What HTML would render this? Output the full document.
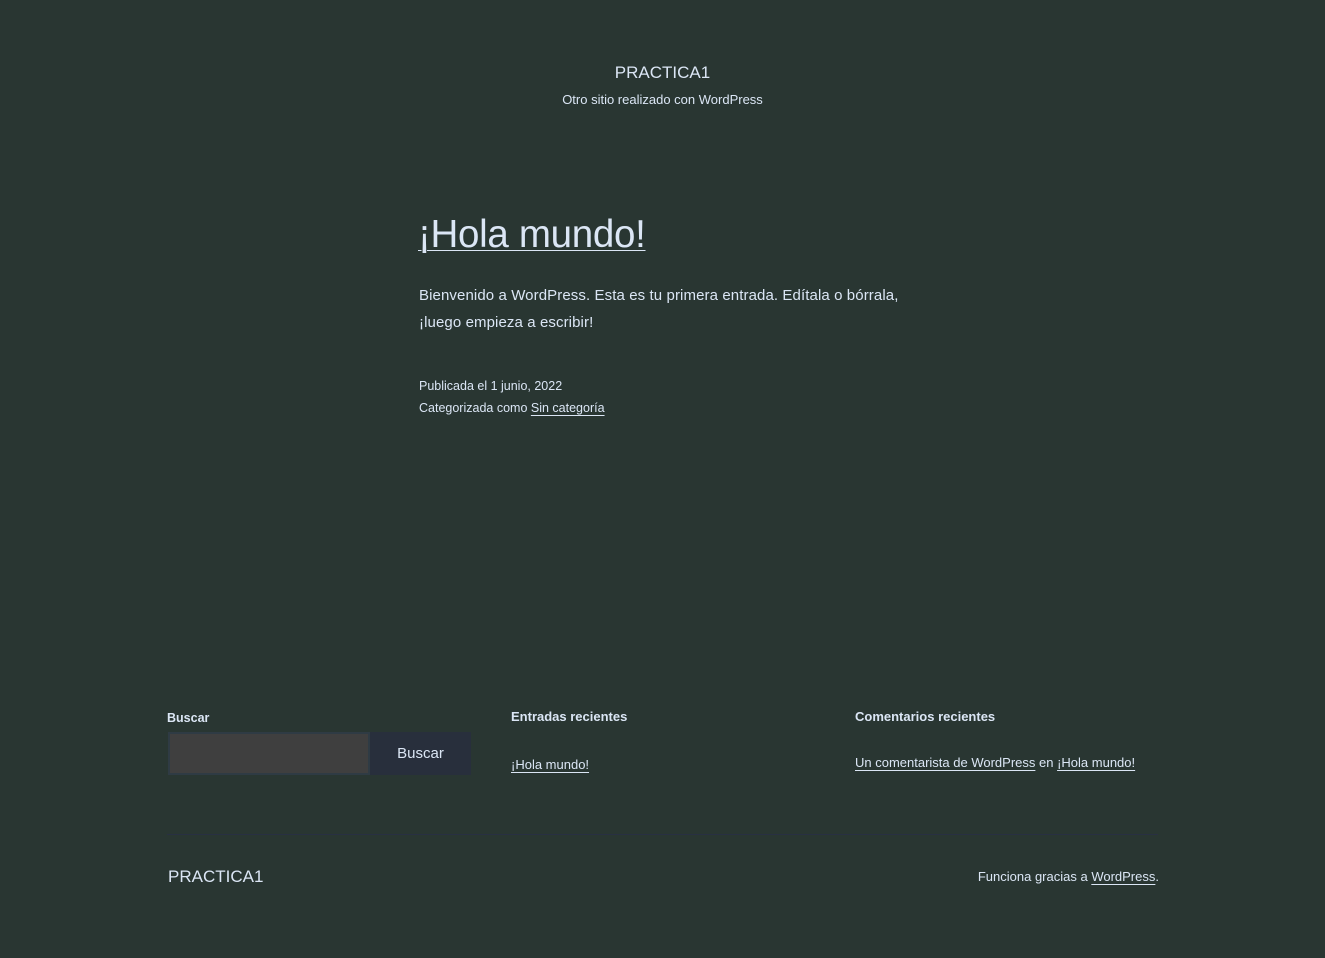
<!DOCTYPE html>
<html><head><meta charset="utf-8"><style>
body{margin:0;width:1325px;height:958px;background:#293632;color:#dbe6f5;font-family:"Liberation Sans",sans-serif;position:relative;overflow:hidden}
.a{position:absolute;white-space:nowrap}
u{text-decoration:underline;text-underline-offset:3px;text-decoration-thickness:1px}
</style></head><body>
<div class="a" style="left:0;width:1325px;text-align:center;top:63px;font-size:17px">PRACTICA1</div>
<div class="a" style="left:0;width:1325px;text-align:center;top:92px;font-size:13px">Otro sitio realizado con WordPress</div>
<div class="a" style="left:418px;top:213px;font-size:38.5px;font-weight:300;letter-spacing:-0.3px"><u>¡Hola mundo!</u></div>
<div class="a" style="left:419px;top:282px;font-size:15px;line-height:27px;font-weight:300;letter-spacing:0.1px">Bienvenido a WordPress. Esta es tu primera entrada. Edítala o bórrala,<br>¡luego empieza a escribir!</div>
<div class="a" style="left:419px;top:375px;font-size:12.5px;line-height:22px">Publicada el 1 junio, 2022<br>Categorizada como <u>Sin categoría</u></div>
<div class="a" style="left:167px;top:711px;font-size:12.5px;font-weight:bold">Buscar</div>
<div class="a" style="left:168px;top:732px;width:198px;height:39px;background:#3f3f3f;border:2px solid #2f3b44"></div>
<div class="a" style="left:370px;top:732px;width:101px;height:43px;background:#282f3c;text-align:center;line-height:43px;font-size:15px">Buscar</div>
<div class="a" style="left:511px;top:709px;font-size:13px;font-weight:bold">Entradas recientes</div>
<div class="a" style="left:511px;top:757px;font-size:13px"><u>¡Hola mundo!</u></div>
<div class="a" style="left:855px;top:709px;font-size:13px;font-weight:bold">Comentarios recientes</div>
<div class="a" style="left:855px;top:755px;font-size:13px"><u>Un comentarista de WordPress</u> en <u>¡Hola mundo!</u></div>
<div class="a" style="left:167px;top:834px;width:991px;height:1px;background:#283042"></div>
<div class="a" style="left:168px;top:867px;font-size:17px;font-weight:300">PRACTICA1</div>
<div class="a" style="right:166px;top:869px;font-size:13px">Funciona gracias a <u>WordPress</u>.</div>
</body></html>
